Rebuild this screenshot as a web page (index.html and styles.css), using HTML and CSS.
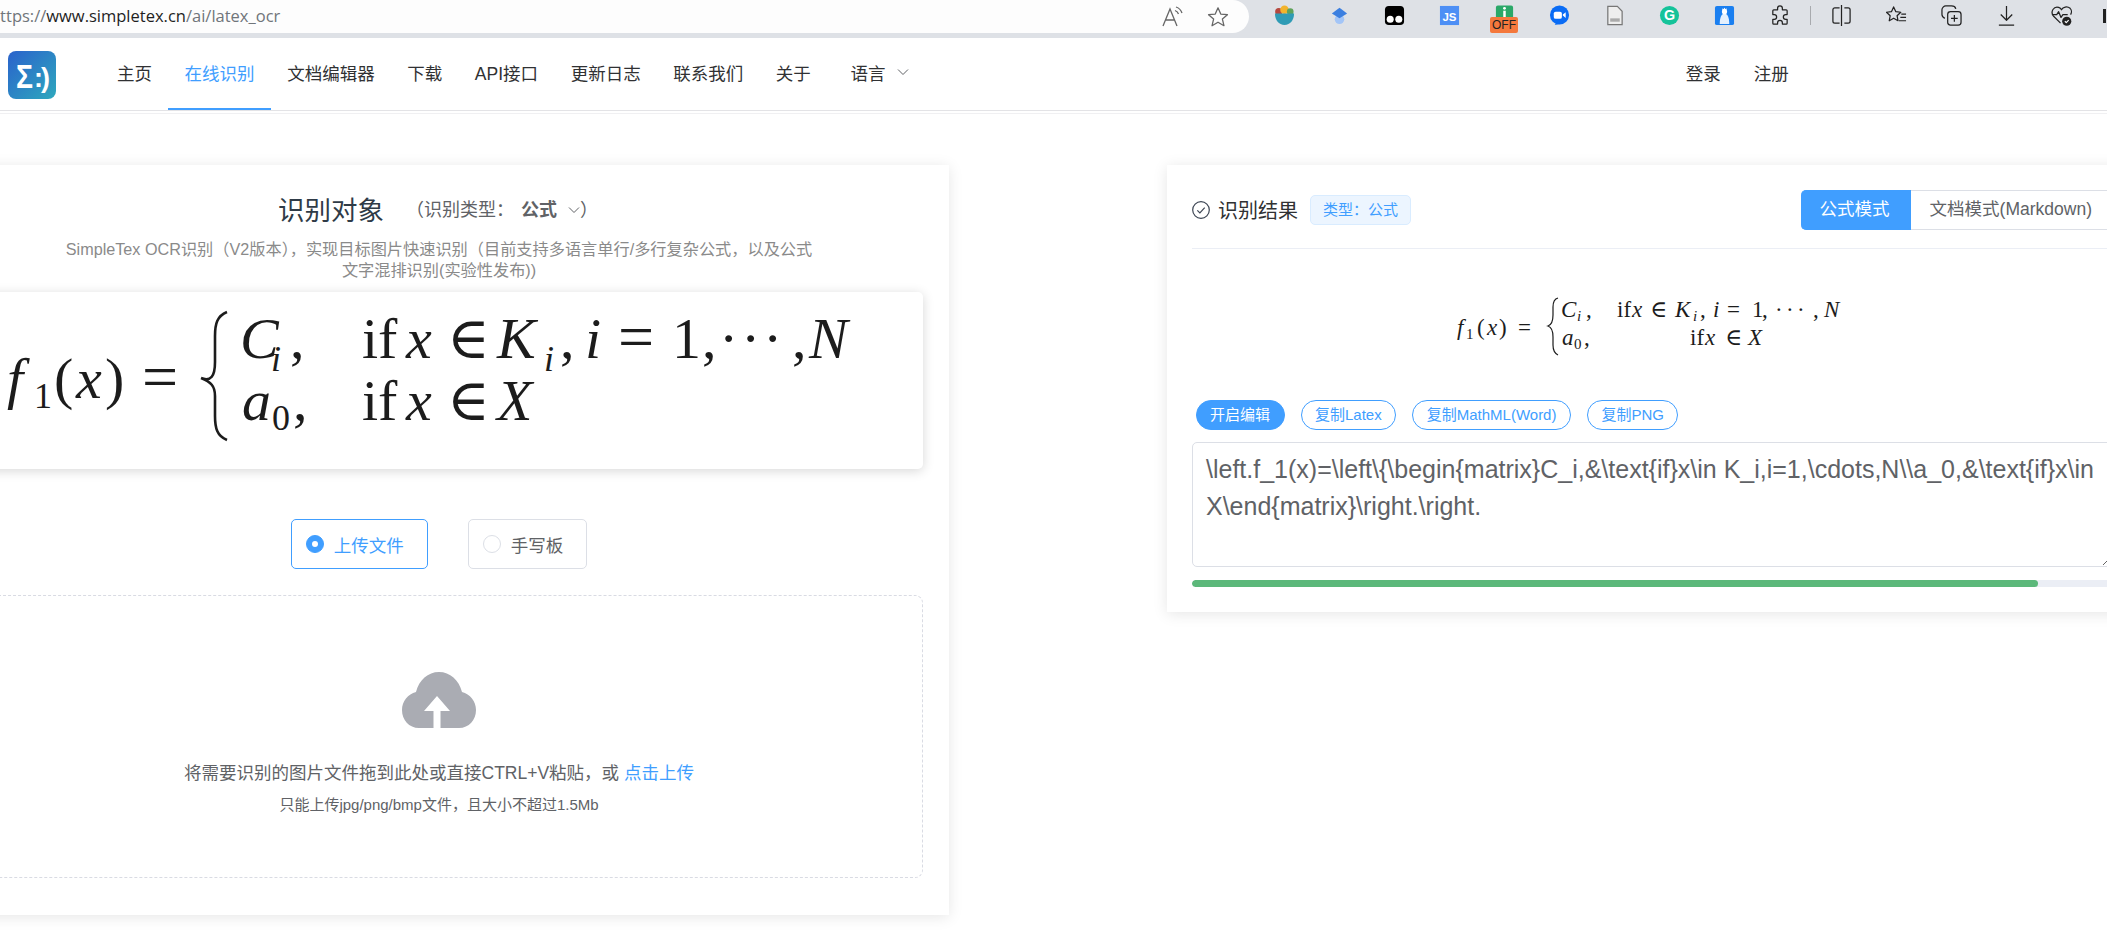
FILE: index.html
```html
<!DOCTYPE html>
<html lang="zh-CN">
<head>
  <meta charset="UTF-8" />
  <title>SimpleTex</title>
  <link rel="stylesheet" href="styles.css">
</head>
<body>
  <div class="browser-bar">
    <div class="address">
      <span class="url"><span class="url-dim">https://</span>www.simpletex.cn<span class="url-dim">/ai/latex_ocr</span></span>
      <svg class="addr-icon" viewBox="0 0 26 24" fill="none" stroke="#666" stroke-width="1.3"><path d="M2 21 9 4l7 17M4.5 15h9"/><path d="M15 2c3 1 5 3 6 6M14 5.500c2 .7 3 2 3.500 3.500"/></svg>
      <svg class="addr-icon star" viewBox="0 0 24 24" fill="none" stroke="#666" stroke-width="1.4" stroke-linejoin="round"><path d="m12 2 3 6.800 7.300.7-5.500 4.800 1.700 7.200-6.500-3.800-6.500 3.800 1.700-7.200L1.700 9.500 9 8.800z"/></svg>
    </div>
    <div class="ext"><svg viewBox="0 0 22 22"><circle cx="5" cy="7" r="3.800" fill="#b5483f"/><circle cx="11" cy="5" r="4.500" fill="#f2b32c"/><circle cx="17" cy="7" r="3.500" fill="#5fa35a"/><path d="M1 9h20c0 7-4 12-10 12S1 16 1 9z" fill="#2f9bb5"/></svg></div>
    <div class="ext"><svg viewBox="0 0 22 22"><circle cx="11" cy="15" r="5" fill="#a3c5f7"/><path d="M11 3l8 6-8 5-8-5z" fill="#3b7fe0"/></svg></div>
    <div class="ext"><svg viewBox="0 0 22 22"><rect x="1" y="1" width="20" height="20" rx="4" fill="#000"/><circle cx="6.500" cy="15" r="3.700" fill="#fff"/><circle cx="15.500" cy="15" r="3.700" fill="#fff"/></svg></div>
    <div class="ext"><svg viewBox="0 0 22 22"><rect x="1" y="1" width="20" height="20" fill="#4d8ff5"/><text x="11" y="16.500" class="ext-js">JS</text></svg></div>
    <div class="ext ext-off">
      <svg viewBox="0 0 22 22"><path d="M2 2.500a2 2 0 0 1 2-2h14a2 2 0 0 1 2 2V14H2z" fill="#2aa868"/><rect x="9.700" y="6" width="2.600" height="7" fill="#fff"/><circle cx="11" cy="3.500" r="1.500" fill="#fff"/></svg>
      <span class="off-badge">OFF</span>
    </div>
    <div class="ext"><svg viewBox="0 0 22 22"><circle cx="11" cy="10.500" r="10" fill="#0a6cf5"/><path d="M6 21l2-3 3 2z" fill="#0a6cf5"/><rect x="5" y="7" width="8.500" height="7.500" rx="2" fill="#fff"/><path d="m14.500 10 3-2.500v6l-3-2.500z" fill="#fff"/></svg></div>
    <div class="ext"><svg viewBox="0 0 22 22"><path d="M4 1.500h10l5 5v14H4z" fill="#eee" stroke="#777" stroke-width="1.300"/><rect x="6.500" y="14" width="10" height="3.500" fill="#aaa"/></svg></div>
    <div class="ext"><svg viewBox="0 0 22 22"><circle cx="11" cy="11" r="10" fill="#15c39a"/><text x="11" y="16" class="ext-g">G</text></svg></div>
    <div class="ext"><svg viewBox="0 0 22 22"><rect x="1" y="1" width="20" height="20" rx="2" fill="#1a7ff0"/><path d="M6 20c0-7 2-11 5-11s5 4 5 11z" fill="#e4f0fd"/><circle cx="11" cy="7" r="2.700" fill="#fff"/><path d="M8.500 3.500l1.300 1 1.200-1.500 1.200 1.500 1.300-1-.5 2.500h-4z" fill="#fff"/></svg></div>
    <div class="ext"><svg class="tool" viewBox="0 0 22 22"><path d="M9 3.500a2.500 2.500 0 0 1 5 0V5h4a1 1 0 0 1 1 1v4h-1.500a2.500 2.500 0 0 0 0 5H19v4a1 1 0 0 1-1 1h-4v-1.500a2.500 2.500 0 0 0-5 0V20H5a1 1 0 0 1-1-1v-4h1.500a2.500 2.500 0 0 0 0-5H4V6a1 1 0 0 1 1-1h4z"/></svg></div>
    <div class="tool-sep"></div>
    <div class="ext"><svg class="tool" viewBox="0 0 22 22"><path d="M9 3H4a2 2 0 0 0-2 2v12a2 2 0 0 0 2 2h5M14 3h4a2 2 0 0 1 2 2v12a2 2 0 0 1-2 2h-4M11 0v22"/></svg></div>
    <div class="ext"><svg class="tool" viewBox="0 0 22 22"><path d="m8 2 2.300 5 5.200.6-3.900 3.600 1 5.300L8 13.800l-4.600 2.700 1-5.300L.5 7.600l5.200-.6z"/><path d="M16 9.500h5M15 13h6M13.500 16.500H21"/></svg></div>
    <div class="ext"><svg class="tool" viewBox="0 0 22 22"><rect x="7" y="7" width="14" height="14" rx="3"/><path d="M14 10.500v7M10.500 14h7"/><path d="M4 14c-2-1-3-2-3-4V5c0-2 2-4 4-4h6c2 0 4 1 4.500 3"/></svg></div>
    <div class="ext"><svg class="tool" viewBox="0 0 22 22"><path d="M11 1v15M5 10l6 6 6-6M3 21h16"/></svg></div>
    <div class="ext ext-heart"><svg class="tool" viewBox="0 0 22 22"><path d="M10 19 2.500 11.500C-1 7 3 1 8 2.500 9.500 3 10.500 4 11 5c1.500-3 6-4 9-1.500 2 2 1.500 5 .5 6.500"/><path d="M1 10h5l2-3 2.500 6 2-3h5"/><circle cx="16.500" cy="17" r="4.800" fill="#222" stroke="none"/><path d="m14.500 17 1.500 1.500 2.500-2.700" stroke="#fff" stroke-width="1.200"/></svg></div>
    <div class="ext-cut"></div>
  </div>

  <div class="nav">
    <svg class="logo" viewBox="0 0 48 48">
      <defs><linearGradient id="logoGrad" x1="0" y1="0" x2="1" y2="1"><stop offset="0" stop-color="#2a62cc"/><stop offset="1" stop-color="#2ea8bd"/></linearGradient></defs>
      <rect width="48" height="48" rx="8" fill="url(#logoGrad)"/>
      <text x="8" y="37" class="logo-text" textLength="17" lengthAdjust="spacingAndGlyphs">Σ</text>
      <text x="26" y="36" class="logo-text logo-small">:</text>
      <text x="33" y="36" class="logo-text logo-small">)</text>
    </svg>
    <a class="nav-item">主页</a>
    <a class="nav-item active">在线识别</a>
    <a class="nav-item">文档编辑器</a>
    <a class="nav-item">下载</a>
    <a class="nav-item">API接口</a>
    <a class="nav-item">更新日志</a>
    <a class="nav-item">联系我们</a>
    <a class="nav-item">关于</a>
    <a class="nav-item lang">语言 <svg class="chev" viewBox="0 0 12 8"><path d="m1 1.500 5 5 5-5"/></svg></a>
    <div class="nav-right">
      <a>登录</a>
      <a>注册</a>
    </div>
  </div>
  <div class="nav-line"></div>

  <div class="main">
    <div class="card left-card">
      <div class="title-row">
        <span class="title">识别对象</span>
        <span class="title-type">（识别类型：<b>公式</b> <svg class="chev" viewBox="0 0 12 8"><path d="m1 1.500 5 5 5-5"/></svg>）</span>
      </div>
      <p class="desc">SimpleTex OCR识别（V2版本），实现目标图片快速识别（目前支持多语言单行/多行复杂公式，以及公式<br>文字混排识别(实验性发布))</p>

      <div class="img-box">
        <svg class="formula" viewBox="-45 292 968 177" width="968" height="177">
          <g class="big">
            <text x="7" y="398" class="mi">f</text>
            <text x="34" y="408" class="sub">1</text>
            <text x="54" y="398">(</text><text x="76" y="398" class="mi">x</text><text x="105" y="398">)</text>
            <text x="142" y="398" class="eq">=</text>
            <text x="240" y="358" class="mi">C<tspan x="271" dy="13" class="sub">i</tspan></text><text x="290" y="358">,</text>
            <text x="362" y="358">if</text><text x="406" y="358" class="mi">x</text><text x="447" y="358">∈</text>
            <text x="497" y="358" class="mi">K<tspan x="544" dy="13" class="sub">i</tspan></text><text x="560" y="358">,</text>
            <text x="585" y="358" class="mi">i</text><text x="618" y="358" class="eq">=</text><text x="672" y="358">1</text><text x="702" y="358">,</text>
            <text x="719" y="358">·</text><text x="741" y="358">·</text><text x="763" y="358">·</text><text x="792" y="358">,</text>
            <text x="809" y="358" class="mi">N</text>
            <text x="242" y="420" class="mi">a</text><text x="272" y="430" class="sub">0</text><text x="293" y="420">,</text>
            <text x="362" y="420">if</text><text x="406" y="420" class="mi">x</text><text x="447" y="420">∈</text>
            <text x="497" y="420" class="mi">X</text>
          </g>
          <path class="brace brace-big" d="M227 312c-10 4-12 12-12 24v26c0 14-4 20-14 16 10 4 14 8 14 18v20c0 12 2 20 12 24"/>
        </svg>
      </div>

      <div class="radios">
        <label class="radio on"><span class="dot"></span>上传文件</label>
        <label class="radio"><span class="dot"></span>手写板</label>
      </div>

      <div class="drop">
        <svg class="cloud" viewBox="0 0 74 56">
          <path d="M17 56C7 56 0 48 0 38c0-9 6-16 14-18C17 8 26 0 37 0s20 8 23 20c8 2 14 9 14 18 0 10-7 18-17 18z" fill="#aaacb3"/>
          <path d="M35 24 22 39h9.500v17h7V39H48z" fill="#fff"/>
        </svg>
        <div class="drop-text">将需要识别的图片文件拖到此处或直接CTRL+V粘贴，或 <a>点击上传</a></div>
        <div class="drop-tip">只能上传jpg/png/bmp文件，且大小不超过1.5Mb</div>
      </div>
    </div>

    <div class="card right-card">
      <div class="result-head">
        <svg class="check" viewBox="0 0 18 18"><circle cx="9" cy="9" r="8.300"/><path d="m5.300 9.300 2.600 2.600 4.800-5.200"/></svg>
        <span class="result-title">识别结果</span>
        <span class="tag">类型：公式</span>
        <div class="modes">
          <span class="mode active">公式模式</span>
          <span class="mode">文档模式(Markdown)</span>
        </div>
      </div>

      <svg class="formula" viewBox="1192 249 920 135" width="920" height="135">
        <g class="small">
          <text x="1457" y="335" class="mi">f</text><text x="1466" y="339" class="sub">1</text>
          <text x="1477" y="335">(</text><text x="1487" y="335" class="mi">x</text><text x="1499" y="335">)</text><text x="1518" y="335">=</text>
          <text x="1561" y="317" class="mi">C<tspan x="1577" dy="4" class="sub">i</tspan></text><text x="1586" y="317">,</text>
          <text x="1617" y="317">if</text><text x="1632" y="317" class="mi">x</text><text x="1650" y="317">∈</text>
          <text x="1675" y="317" class="mi">K<tspan x="1693" dy="4" class="sub">i</tspan></text><text x="1700" y="317">,</text>
          <text x="1713" y="317" class="mi">i</text><text x="1727" y="317">=</text><text x="1752" y="317">1</text><text x="1762" y="317">,</text>
          <text x="1775" y="317">·</text><text x="1786" y="317">·</text><text x="1797" y="317">·</text><text x="1813" y="317">,</text>
          <text x="1824" y="317" class="mi">N</text>
          <text x="1562" y="345" class="mi">a</text><text x="1574" y="349" class="sub">0</text><text x="1584" y="345">,</text>
          <text x="1690" y="345">if</text><text x="1705" y="345" class="mi">x</text><text x="1725" y="345">∈</text>
          <text x="1748" y="345" class="mi">X</text>
        </g>
        <path class="brace brace-small" d="M1558 298c-4 1-5 5-5 9v8c0 6-2 10-5 11 3 1 5 5 5 11v8c0 5 1 8 5 10"/>
      </svg>

      <div class="chips">
        <span class="chip solid">开启编辑</span>
        <span class="chip">复制Latex</span>
        <span class="chip">复制MathML(Word)</span>
        <span class="chip">复制PNG</span>
      </div>

      <textarea class="latex" readonly>\left.f_1(x)=\left\{\begin{matrix}C_i,&amp;\text{if}x\in K_i,i=1,\cdots,N\\a_0,&amp;\text{if}x\in X\end{matrix}\right.\right.</textarea>

      <div class="progress"><div class="progress-fill" style="width: 92%"></div></div>
    </div>
  </div>
</body>
</html>
```

FILE: styles.css
```css
* {
  box-sizing: border-box;
}

html, body {
  height: 930px;
}

body {
  margin: 0;
  width: 2107px;
  overflow: hidden;
  background: #fff;
  font-family: "Liberation Sans", "Noto Sans CJK SC", sans-serif;
  color: #303133;
}

/* browser chrome */
.browser-bar {
  display: flex;
  align-items: flex-start;
  height: 38px;
  background: #dee1e6;
  overflow: hidden;
}

.address {
  display: flex;
  align-items: center;
  flex: none;
  width: 1249px;
  height: 33px;
  margin-right: 8px;
  background: #fdfdfd;
  border-radius: 0 20px 20px 0;
}

.url {
  margin: 0 0 3px -10px;
  font-family: "Open Sans", sans-serif;
  font-size: 16.500px;
  color: #1f1f1f;
}

.url-dim {
  color: #70757a;
}

.addr-icon {
  width: 26px;
  height: 24px;
  margin-left: auto;
  margin-right: 68px;
}

.addr-icon.star {
  width: 22px;
  height: 22px;
  margin-left: -48px;
  margin-right: 20px;
}

.ext {
  display: flex;
  justify-content: center;
  flex: none;
  width: 55px;
  padding-top: 5px;
}

.ext svg {
  width: 21px;
  height: 21px;
}

.ext-off {
  position: relative;
}

.off-badge {
  position: absolute;
  top: 17px;
  left: 13px;
  width: 28px;
  height: 16px;
  background: #f4783c;
  border-radius: 2px;
  font-size: 12px;
  line-height: 16px;
  text-align: center;
  color: #222;
}

.ext-js {
  font: bold 12px "Liberation Sans", sans-serif;
  text-anchor: middle;
  fill: #fff;
}

.ext-g {
  font: bold 15px "Liberation Sans", sans-serif;
  text-anchor: middle;
  fill: #fff;
}

.tool {
  fill: none;
  stroke: #222;
  stroke-width: 1.300;
  stroke-linejoin: round;
}

.tool-sep {
  flex: none;
  width: 1px;
  height: 19px;
  margin: 6px 3px 0;
  background: #a8aaae;
}

.ext-cut {
  flex: none;
  width: 3px;
  height: 14px;
  margin: 9px 0 0 14px;
  background: #222;
}

/* top nav */
.nav {
  display: flex;
  align-items: stretch;
  height: 73px;
  padding-left: 8px;
  background: #fff;
  border-bottom: 1px solid #e3e3e6;
}

.logo {
  flex: none;
  width: 48px;
  height: 48px;
  margin: 13px 44.700px 0 0;
}

.logo-text {
  font: 34px "Liberation Sans", sans-serif;
  font-weight: bold;
  fill: #fff;
}

.logo-small {
  font-size: 27px;
}

.nav-item {
  display: flex;
  align-items: center;
  padding: 0 16.300px 2px;
  border-bottom: 2px solid transparent;
  font-size: 17.500px;
  color: #303133;
  white-space: nowrap;
}

.nav-item.active {
  color: #409eff;
  border-bottom-color: #409eff;
}

.nav-item.lang {
  margin-left: 7px;
}

.chev {
  width: 12px;
  height: 8px;
  margin-left: 12px;
  fill: none;
  stroke: #606266;
  stroke-width: 1;
}

.nav-right {
  display: flex;
  align-items: center;
  gap: 33px;
  padding-bottom: 3px;
  margin-left: 760px;
  font-size: 17.500px;
}

.nav-line {
  height: 3px;
  border-bottom: 1px solid #f0f0f2;
}

/* page body */
.main {
  display: flex;
  align-items: flex-start;
  gap: 218px;
  width: 2300px;
  margin: 51px 0 0 -71px;
}

.card {
  flex: none;
  background: #fff;
  box-shadow: 0 2px 14px rgba(0, 0, 0, 0.1);
}

.left-card {
  width: 1020px;
  height: 750px;
  padding: 26px 26px 0;
}

.title-row {
  display: flex;
  align-items: center;
  justify-content: center;
  height: 36px;
  padding: 0 2px 2px 0;
}

.title {
  font-size: 26.500px;
  margin-right: 22px;
  color: #2f3b47;
}

.title-type {
  font-size: 18px;
  color: #606266;
}

.title-type b {
  margin-left: 7px;
}

.title-type .chev {
  margin: 0 0 2px 6px;
}

.desc {
  margin: 12px 0 11px;
  font-size: 16.200px;
  line-height: 21px;
  text-align: center;
  color: #8a8a8a;
}

.img-box {
  height: 177px;
  background: #fff;
  border-radius: 5px;
  box-shadow: 0 2px 12px rgba(0, 0, 0, 0.16);
}

.formula {
  display: block;
  fill: #1c1c1c;
}

.formula text {
  font-family: "Liberation Serif", "DejaVu Serif", serif;
}

.big text {
  font-size: 58px;
}

.big .sub {
  font-size: 36px;
}

.big .eq {
  font-size: 64px;
}

.small text {
  font-size: 23px;
}

.small .sub {
  font-size: 15px;
}

.formula .mi {
  font-style: italic;
}

.brace {
  fill: none;
  stroke: #1c1c1c;
}

.brace-big {
  stroke-width: 2.600;
}

.brace-small {
  stroke-width: 1.200;
}

.radios {
  display: flex;
  justify-content: center;
  gap: 40px;
  margin-top: 50px;
}

.radio {
  display: flex;
  align-items: center;
  height: 50px;
  padding: 0 23px 0 14px;
  border: 1px solid #dcdfe6;
  border-radius: 5px;
  font-size: 17.500px;
  color: #606266;
}

.dot {
  width: 18px;
  height: 18px;
  margin-right: 10px;
  background: #fff;
  border: 1px solid #dcdfe6;
  border-radius: 50%;
}

.radio.on {
  border-color: #409eff;
  color: #409eff;
}

.radio.on .dot {
  position: relative;
  background: #409eff;
  border-color: #409eff;
}

.radio.on .dot::after {
  content: "";
  position: absolute;
  top: 5px;
  left: 5px;
  width: 6px;
  height: 6px;
  background: #fff;
  border-radius: 50%;
}

.drop {
  display: flex;
  flex-direction: column;
  align-items: center;
  height: 283px;
  margin-top: 26px;
  padding-top: 76px;
  border: 1px dashed #d9dbe3;
  border-radius: 8px;
}

.cloud {
  width: 74px;
  height: 56px;
}

.drop-text {
  margin-top: 33px;
  font-size: 17.500px;
  line-height: 24px;
  color: #606266;
}

.drop-text a {
  color: #409eff;
}

.drop-tip {
  margin-top: 10px;
  font-size: 15px;
  line-height: 20px;
  color: #606266;
}

.right-card {
  width: 970px;
  height: 447px;
  padding: 25px;
}

.result-head {
  display: flex;
  align-items: center;
  height: 59px;
  padding-bottom: 18px;
  border-bottom: 1px solid #ebeef5;
}

.check {
  width: 18px;
  height: 18px;
  fill: none;
  stroke: #3d4654;
  stroke-width: 1.200;
}

.result-title {
  margin: 0 12px 2px 8px;
  font-size: 20px;
  color: #303133;
}

.tag {
  height: 30px;
  padding: 0 12px;
  background: #ecf5ff;
  border: 1px solid #d9ecff;
  border-radius: 5px;
  font-size: 15px;
  line-height: 27px;
  color: #409eff;
}

.modes {
  display: flex;
  margin-left: auto;
}

.mode {
  height: 40px;
  padding: 0 19px;
  border: 1px solid #dcdfe6;
  border-left: 0;
  font-size: 17.500px;
  line-height: 36px;
  color: #606266;
}

.mode.active {
  width: 110px;
  background: #409eff;
  border-color: #409eff;
  border-radius: 5px 0 0 5px;
  color: #fff;
}

.chips {
  display: flex;
  gap: 16px;
  margin: 16px 0 12px 3.500px;
}

.chip {
  height: 30px;
  padding: 0 13.500px;
  border: 1px solid #409eff;
  border-radius: 15px;
  font-size: 15px;
  line-height: 27px;
  color: #409eff;
}

.chip.solid {
  background: #409eff;
  color: #fff;
}

.latex {
  display: block;
  width: 920px;
  height: 125px;
  padding: 8px 13px;
  border: 1px solid #dcdfe6;
  border-radius: 5px;
  font-family: "Liberation Sans", sans-serif;
  font-size: 25px;
  line-height: 37px;
  color: #606266;
  outline: none;
}

.progress {
  height: 7px;
  margin-top: 13px;
  background: #ebeef5;
  border-radius: 4px;
  overflow: hidden;
}

.progress-fill {
  height: 100%;
  background: #5cb87a;
  border-radius: 4px;
}
```
